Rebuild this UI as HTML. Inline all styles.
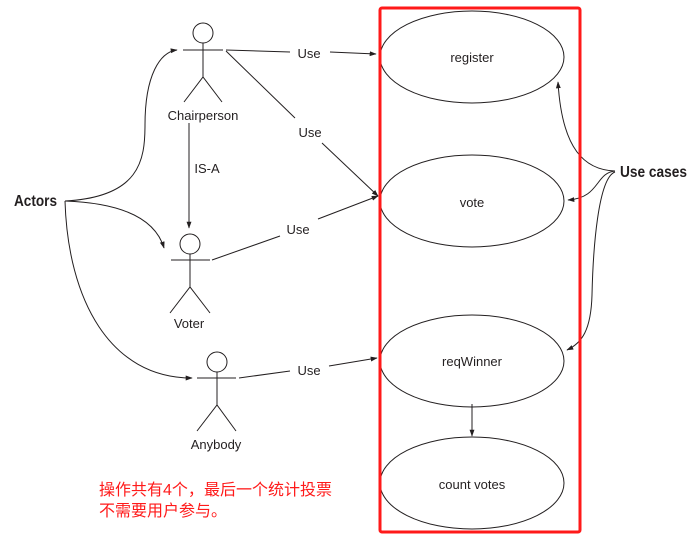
<!DOCTYPE html>
<html><head><meta charset="utf-8"><style>
html,body{margin:0;padding:0;background:#fff;width:695px;height:536px;overflow:hidden}
svg{display:block}
text{font-family:"Liberation Sans",sans-serif;fill:#231f20}
</style></head><body>
<svg width="695" height="536" viewBox="0 0 695 536">
<defs><marker id="a" viewBox="0 0 10 10" refX="9" refY="5" markerWidth="7" markerHeight="7" orient="auto"><path d="M0,1.5 L10,5 L0,8.5 z" fill="#231f20"/></marker></defs>
<g stroke="#231f20" stroke-width="1" fill="none">
<circle cx="203" cy="33" r="10"/><path d="M183,50H223M203,43V77M184,102L203,77L222,102"/>
<circle cx="190" cy="244" r="10"/><path d="M171,260H210M190,254V287M170,313L190,287L210,313"/>
<circle cx="217" cy="362" r="10"/><path d="M197,378H236M217,372V405M197,431L217,405L236,431"/>
<path d="M226,50L290,52"/><path d="M330,52L376,54" marker-end="url(#a)"/>
<path d="M226,51L295,118"/><path d="M322,143L378,196" marker-end="url(#a)"/>
<path d="M212,260L280,236"/><path d="M318,219L378,196" marker-end="url(#a)"/>
<path d="M239,378L290,371"/><path d="M329,366L377,358" marker-end="url(#a)"/>
<path d="M189,123V228" marker-end="url(#a)"/>
<path d="M472,404V436" marker-end="url(#a)"/>
<path d="M65,201C140,197 145,160 145,125C145,75 160,52 177,50" marker-end="url(#a)"/>
<path d="M65,201C120,203 155,218 164,248" marker-end="url(#a)"/>
<path d="M65,201C68,300 110,378 192,378" marker-end="url(#a)"/>
<path d="M615,171C585,170 562,150 558,82" marker-end="url(#a)"/>
<path d="M615,171C595,173 600,198 568,200" marker-end="url(#a)"/>
<path d="M615,172C598,178 593,250 592,295C591,330 582,343 567,350" marker-end="url(#a)"/>
<ellipse cx="472" cy="57" rx="92" ry="46"/>
<ellipse cx="472" cy="201" rx="92" ry="46"/>
<ellipse cx="472" cy="361" rx="92" ry="46"/>
<ellipse cx="472" cy="483" rx="92" ry="46"/>
</g>
<rect x="380" y="8" width="200" height="524" rx="2" fill="none" stroke="#ff1a1a" stroke-width="3"/>
<g font-size="13" text-anchor="middle">
<text x="472" y="62">register</text>
<text x="472" y="207">vote</text>
<text x="472" y="366">reqWinner</text>
<text x="472" y="489">count votes</text>
<text x="203" y="120">Chairperson</text>
<text x="189" y="328">Voter</text>
<text x="216" y="449">Anybody</text>
<text x="309" y="58">Use</text>
<text x="310" y="137">Use</text>
<text x="298" y="234">Use</text>
<text x="309" y="375">Use</text>
<text x="207" y="173">IS-A</text>
</g>
<text x="14" y="206" font-size="16" font-weight="bold" textLength="43" lengthAdjust="spacingAndGlyphs">Actors</text>
<text x="620" y="177" font-size="16" font-weight="bold" textLength="67" lengthAdjust="spacingAndGlyphs">Use cases</text>
<g font-size="16" style="font-family:'Liberation Sans','Noto Sans CJK SC',sans-serif">
<text x="99" y="495" style="fill:#ff1a1a" textLength="233" lengthAdjust="spacingAndGlyphs">操作共有4个，最后一个统计投票</text>
<text x="99" y="516" style="fill:#ff1a1a">不需要用户参与。</text>
</g>
</svg>
</body></html>
